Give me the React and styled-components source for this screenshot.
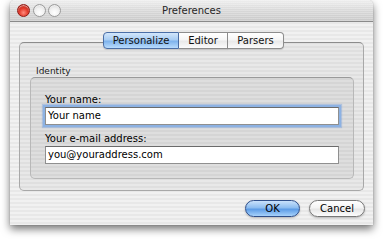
import React from "react";
import styled, { createGlobalStyle } from "styled-components";

const Global = createGlobalStyle`
  html, body { margin: 0; padding: 0; background: #ffffff; }
  body { width: 384px; height: 242px; overflow: hidden; font-family: "DejaVu Sans", "Noto Sans", sans-serif; }
`;

const pinstripe = `repeating-linear-gradient(to bottom, #f1f1f1 0px, #f1f1f1 2px, #e8e8e8 2px, #e8e8e8 4px)`;

const Window = styled.div`
  margin-left: 10px;
  width: 363px;
  height: 225px;
  border-radius: 5px 5px 0 0;
  background: ${pinstripe};
  box-shadow: 0 4px 9px rgba(0, 0, 0, 0.55), 0 0 1px rgba(0, 0, 0, 0.4);
  display: flex;
  flex-direction: column;
  overflow: hidden;
`;

const TitleBar = styled.div`
  height: 22px;
  flex: none;
  box-sizing: border-box;
  border-bottom: 1px solid #8a8a8a;
  background:
    repeating-linear-gradient(to bottom, rgba(255,255,255,0.25) 0 1px, rgba(0,0,0,0) 1px 2px),
    linear-gradient(to bottom, #eeeeee, #d8d8d8 50%, #c9c9c9);
  display: flex;
  align-items: center;
  padding-left: 7px;
  position: relative;
`;

const Lights = styled.div`
  display: flex;
  gap: 2.5px;
`;

const Light = styled.span`
  width: 13px;
  height: 13px;
  border-radius: 50%;
  box-sizing: border-box;
  border: 1px solid ${(p) => (p.$red ? "#8f1a15" : "#9a9a9a")};
  background: ${(p) =>
    p.$red
      ? "radial-gradient(circle at 50% 70%, #ff8b7d 0%, #e33b2c 45%, #a41d12 100%)"
      : "radial-gradient(circle at 50% 70%, #ffffff 0%, #f0f0f0 50%, #c8c8c8 100%)"};
  box-shadow: inset 0 1px 1px rgba(255,255,255,0.6);
`;

const Title = styled.div`
  position: absolute;
  left: 0;
  right: 0;
  top: 0;
  height: 21px;
  line-height: 21px;
  text-align: center;
  font-size: 10px;
  color: #262626;
  pointer-events: none;
`;

const Content = styled.div`
  flex: 1;
  display: flex;
  flex-direction: column;
  padding: 10px 9px 0 9px;
`;

const Tabs = styled.div`
  display: flex;
  align-self: flex-start;
  margin-left: 84px;
  margin-bottom: -7px;
  position: relative;
  z-index: 1;
`;

const Tab = styled.div`
  width: ${(p) => p.$w}px;
  height: 17px;
  box-sizing: border-box;
  text-align: center;
  line-height: 15px;
  font-size: 10px;
  color: #111;
  border: 1px solid ${(p) => (p.$active ? "#4a6ea6" : "#8d8d8d")};
  border-left-width: ${(p) => (p.$first ? 1 : 0)}px;
  border-radius: ${(p) => (p.$first ? "4px 0 0 4px" : p.$last ? "0 4px 4px 0" : "0")};
  background: ${(p) =>
    p.$active
      ? "linear-gradient(to bottom, #d2e6fb 0%, #a9cdf3 45%, #7fb3ec 55%, #b9dcfd 100%)"
      : "linear-gradient(to bottom, #ffffff 0%, #f6f6f6 45%, #e9e9e9 55%, #fbfbfb 100%)"};
  box-shadow: 0 1px 1px rgba(0, 0, 0, 0.15);
`;

const Pane = styled.div`
  height: 149px;
  flex: none;
  box-sizing: border-box;
  border: 1px solid #a8a8a8;
  border-top-color: #8c8c8c;
  border-radius: 5px;
  background: rgba(0, 0, 0, 0.035);
  padding: 23px 9px 11px 10px;
  display: flex;
  flex-direction: column;
`;

const GroupLabel = styled.div`
  font-size: 9px;
  color: #1a1a1a;
  margin-left: 6px;
  height: 11px;
  line-height: 11px;
`;

const Group = styled.div`
  flex: 1;
  border: 1px solid #b8b8b8;
  border-top-color: #9a9a9a;
  border-radius: 5px;
  background: rgba(0, 0, 0, 0.045);
  padding: 16px 14px 0 14px;
  display: flex;
  flex-direction: column;
`;

const Label = styled.div`
  font-size: 10px;
  color: #000;
  height: 13px;
  line-height: 12px;
  margin-top: ${(p) => p.$mt}px;
`;

const Field = styled.div`
  height: 18px;
  box-sizing: border-box;
  background: #fff;
  border: 1px solid #8f8f8f;
  border-top-color: #6b6b6b;
  font-size: 10px;
  color: #000;
  padding-left: 2px;
  line-height: 16px;
  box-shadow: ${(p) => (p.$focus ? "0 0 0 2px #8db2e3, 0 0 1px 3px rgba(120,160,220,0.45)" : "none")};
`;

const Buttons = styled.div`
  display: flex;
  justify-content: flex-end;
  gap: 9px;
  margin-top: 9px;
  margin-right: -1px;
`;

const Button = styled.div`
  width: ${(p) => p.$w}px;
  height: 17px;
  box-sizing: border-box;
  border-radius: 9px;
  border: 1px solid ${(p) => (p.$default ? "#2f4f8a" : "#777")};
  background: ${(p) =>
    p.$default
      ? "linear-gradient(to bottom, #c9e1fb 0%, #8dbdf0 45%, #5d9ce6 55%, #a7d2fb 100%)"
      : "linear-gradient(to bottom, #ffffff 0%, #f4f4f4 45%, #e6e6e6 55%, #fdfdfd 100%)"};
  box-shadow: 0 1px 2px rgba(0, 0, 0, 0.25);
  font-size: 10px;
  color: #000;
  text-align: center;
  line-height: 15px;
`;

export default function App() {
  return (
    <>
      <Global />
      <Window>
        <TitleBar>
          <Lights>
            <Light $red />
            <Light />
            <Light />
          </Lights>
          <Title>Preferences</Title>
        </TitleBar>
        <Content>
          <Tabs>
            <Tab $active $first $w={76}>Personalize</Tab>
            <Tab $w={49}>Editor</Tab>
            <Tab $last $w={56}>Parsers</Tab>
          </Tabs>
          <Pane>
            <GroupLabel>Identity</GroupLabel>
            <Group>
              <Label $mt={0}>Your name:</Label>
              <Field $focus>Your name</Field>
              <Label $mt={8}>Your e-mail address:</Label>
              <Field>you@youraddress.com</Field>
            </Group>
          </Pane>
          <Buttons>
            <Button $w={55} $default>OK</Button>
            <Button $w={56}>Cancel</Button>
          </Buttons>
        </Content>
      </Window>
    </>
  );
}
